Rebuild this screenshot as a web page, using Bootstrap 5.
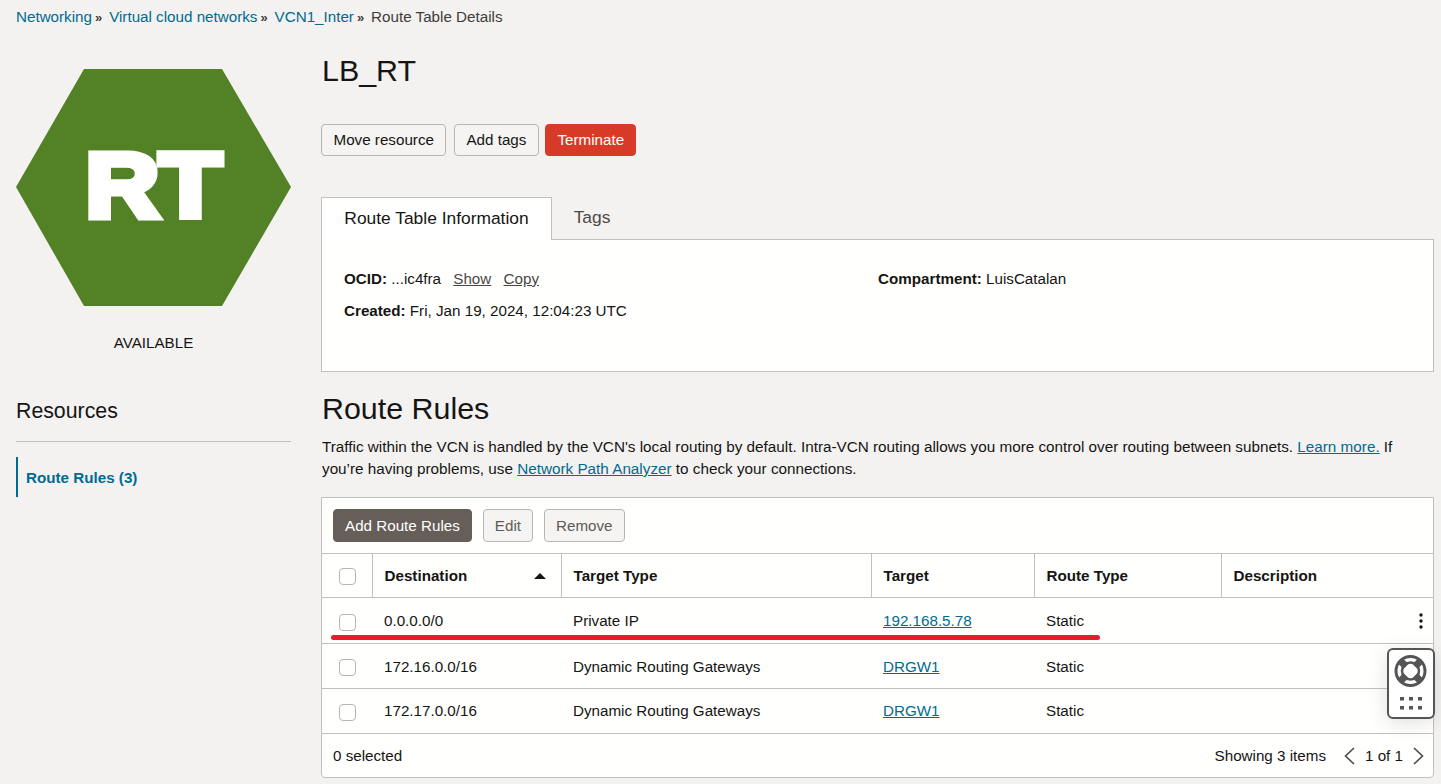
<!DOCTYPE html>
<html lang="en">
<head>
    <meta charset="UTF-8">
    <title>Route Table Details</title>
    <link href="https://cdn.jsdelivr.net/npm/bootstrap@5.3.0/dist/css/bootstrap.min.css" rel="stylesheet">
    <style>
        html, body { height: 784px; overflow: hidden; }
        body { background: #f3f2f1; color: #161513; font-family: "Liberation Sans", Arial, sans-serif; font-size: 15.2px; line-height: 20px; position: relative; }
        a { color: #006b8f; }
        .page-wrap { padding: 7px 7px 0 16px; }
        .crumbs { height: 20px; color: #3f3c3a; }
        .crumbs a { text-decoration: none; }
        .crumbs .sep { font-size: 13px; font-weight: 700; margin: 0 2.7px 0 3px; }
        .main-row { display: flex; gap: 30px; margin-top: 25px; }
        .side-col { width: 275px; flex: none; }
        .content-col { flex: 1; min-width: 0; }
        .hex-logo { display: block; margin-top: 17px; }
        .hex-logo text { font-family: "Liberation Sans", Arial, sans-serif; font-weight: 700; font-size: 90px; fill: #fff; stroke: #fff; stroke-width: 7px; stroke-linejoin: miter; }
        .state-label { text-align: center; margin-top: 27px; }
        .res-title { font-size: 21.3px; line-height: 24px; margin: 46px 0 0; padding-bottom: 18px; border-bottom: 1px solid #c3bfba; font-weight: 400; }
        .res-link { display: block; margin-top: 15px; border-left: 2px solid #006b8f; padding: 11px 8px; font-weight: 700; color: #006b8f; text-decoration: none; height: 40px; }
        .page-title { font-size: 30.4px; line-height: 36px; font-weight: 400; margin: 0; padding-left: 1px; }
        .action-row { margin-top: 36px; display: flex; gap: 7.5px; }
        .oci-btn { height: 32px; padding: 0 11.5px; font-size: 15.2px; line-height: 30px; border: 1px solid #b9b5b0; border-radius: 4px; background: #f5f4f2; color: #161513; }
        .oci-btn.danger { background: #d73b27; border-color: #d73b27; color: #fff; padding: 0 11px; margin-left: -1px; }
        .oci-btn.dark { background: #665e59; border-color: #665e59; color: #fff; }
        .oci-btn.off { color: #5f5a56; }
        .tab-strip { margin-top: 41px; display: flex; }
        .tab-on { height: 43px; width: 231px; text-align: center; font-size: 17.4px; line-height: 41px; background: #fff; border: 1px solid #c3bfba; border-bottom: 0; position: relative; z-index: 1; }
        .tab-off { width: 80px; text-align: center; font-size: 17.4px; line-height: 41px; color: #4c4845; }
        .info-panel { background: #fffffe; border: 1px solid #c3bfba; height: 133px; margin-top: -1px; padding: 29px 22px 0; display: flex; }
        .info-left { width: 534px; }
        .info-line { margin-bottom: 12px; }
        .info-line a { color: #4c4845; margin-left: 8px; }
        .section-title { font-size: 30.4px; line-height: 38px; font-weight: 400; margin: 17px 0 0; padding-left: 1px; }
        .section-text { margin: 9px 0 0; padding-left: 1px; line-height: 22px; font-size: 15.27px; }
        .table-panel { background: #fffffe; border: 1px solid #c3bfba; border-radius: 0 0 4px 4px; margin-top: 17px; }
        .table-tools { height: 56px; padding: 11px 11px 0; display: flex; gap: 11px; border-bottom: 1px solid #c3bfba; }
        .table-tools .oci-btn { height: 33px; padding: 0 11px; }
        .rule-table { table-layout: fixed; margin: 0; width: 100%; --bs-table-bg: transparent; }
        .rule-table th, .rule-table td { padding: 0 12px; border-bottom: 1px solid #c3bfba; vertical-align: middle; color: #161513; }
        .rule-table th { height: 43px; padding-top: 2px; font-weight: 700; border-left: 1px solid #c3bfba; }
        .rule-table th:first-child { border-left: 0; padding-left: 17px; }
        .rule-table td { height: 45px; padding-top: 2px; }
        .rule-table td:first-child { padding-left: 17px; padding-top: 4px; }
        .rule-table tbody tr:first-child td { height: 46px; }
        .rule-table tbody tr:last-child td:not(:first-child) { padding-top: 0; }
        .sort-head { display: flex; justify-content: space-between; align-items: center; }
        .sort-arrow { width: 0; height: 0; border-left: 6px solid transparent; border-right: 6px solid transparent; border-bottom: 6px solid #161513; margin-right: 3px; }
        .fake-check { display: block; width: 17px; height: 17px; border: 1px solid #b9b5b0; border-radius: 4px; background: #fff; }
        .row-menu { float: right; margin-right: -2px; }
        .table-foot { height: 43px; padding: 2px 9px 0 11px; display: flex; justify-content: space-between; align-items: center; }
        .pager { display: flex; align-items: center; gap: 10px; }
        .red-mark { position: absolute; left: 331px; top: 635px; width: 769px; height: 5px; background: #e81c2a; border-radius: 3px; }
        .help-widget { position: absolute; left: 1387px; top: 648px; width: 48px; height: 71px; background: #fff; border: 2px solid #555; border-radius: 6px; box-shadow: 0 4px 20px rgba(0,0,0,.12); }
    </style>
</head>
<body>

<div class="page-wrap">
    <div class="crumbs">
        <a href="#">Networking</a><span class="sep">&raquo;</span>
        <a href="#">Virtual cloud networks</a><span class="sep">&raquo;</span>
        <a href="#">VCN1_Inter</a><span class="sep">&raquo;</span>
        Route Table Details
    </div>

    <div class="main-row">
        <!-- left column -->
        <div class="side-col">
            <svg class="hex-logo" width="275" height="237" viewBox="0 0 275 237">
                <polygon points="68,0 206,0 275,118 206,237 68,237 0,118" fill="#538125"/>
                <text x="69.500" y="148" textLength="136" lengthAdjust="spacingAndGlyphs">RT</text>
            </svg>
            <div class="state-label">AVAILABLE</div>
            <h2 class="res-title">Resources</h2>
            <a class="res-link" href="#">Route Rules (3)</a>
        </div>

        <!-- main column -->
        <div class="content-col">
            <h1 class="page-title">LB_RT</h1>
            <div class="action-row">
                <button class="oci-btn" type="button">Move resource</button>
                <button class="oci-btn" type="button">Add tags</button>
                <button class="oci-btn danger" type="button">Terminate</button>
            </div>

            <div class="tab-strip">
                <div class="tab-on">Route Table Information</div>
                <div class="tab-off">Tags</div>
            </div>
            <div class="info-panel">
                <div class="info-left">
                    <div class="info-line"><b>OCID:</b> ...ic4fra <a href="#">Show</a> <a href="#">Copy</a></div>
                    <div class="info-line"><b>Created:</b> Fri, Jan 19, 2024, 12:04:23 UTC</div>
                </div>
                <div><b>Compartment:</b> LuisCatalan</div>
            </div>

            <h2 class="section-title">Route Rules</h2>
            <p class="section-text">Traffic within the VCN is handled by the VCN's local routing by default. Intra-VCN routing allows you more control over routing between subnets. <a href="#">Learn more.</a> If you’re having problems, use <a href="#">Network Path Analyzer</a> to check your connections.</p>

            <div class="table-panel">
                <div class="table-tools">
                    <button class="oci-btn dark" type="button">Add Route Rules</button>
                    <button class="oci-btn off" type="button">Edit</button>
                    <button class="oci-btn off" type="button">Remove</button>
                </div>
                <table class="table rule-table">
                    <colgroup>
                        <col style="width:50px"><col style="width:189px"><col style="width:310px"><col style="width:163px"><col style="width:187px"><col>
                    </colgroup>
                    <thead>
                        <tr>
                            <th><span class="fake-check"></span></th>
                            <th><div class="sort-head">Destination <span class="sort-arrow"></span></div></th>
                            <th>Target Type</th>
                            <th>Target</th>
                            <th>Route Type</th>
                            <th>Description</th>
                        </tr>
                    </thead>
                    <tbody>
                        <tr>
                            <td><span class="fake-check"></span></td>
                            <td>0.0.0.0/0</td>
                            <td>Private IP</td>
                            <td><a href="#">192.168.5.78</a></td>
                            <td>Static</td>
                            <td>
                                <svg class="row-menu" width="4" height="16" viewBox="0 0 4 16" fill="#161513"><circle cx="2" cy="2" r="1.7"/><circle cx="2" cy="8" r="1.7"/><circle cx="2" cy="14" r="1.7"/></svg>
                            </td>
                        </tr>
                        <tr>
                            <td><span class="fake-check"></span></td>
                            <td>172.16.0.0/16</td>
                            <td>Dynamic Routing Gateways</td>
                            <td><a href="#">DRGW1</a></td>
                            <td>Static</td>
                            <td></td>
                        </tr>
                        <tr>
                            <td><span class="fake-check"></span></td>
                            <td>172.17.0.0/16</td>
                            <td>Dynamic Routing Gateways</td>
                            <td><a href="#">DRGW1</a></td>
                            <td>Static</td>
                            <td></td>
                        </tr>
                    </tbody>
                </table>
                <div class="table-foot">
                    <span>0 selected</span>
                    <div class="pager">
                        <span class="pager-count">Showing 3 items</span>
                        <svg class="ms-2" width="11" height="20" viewBox="0 0 11 20" fill="none" stroke="#4c4845" stroke-width="1.6"><path d="M10 2 1.5 10l8.500 8"/></svg>
                        <span>1 of 1</span>
                        <svg width="11" height="20" viewBox="0 0 11 20" fill="none" stroke="#4c4845" stroke-width="1.6"><path d="m1 2 8.500 8L1 18"/></svg>
                    </div>
                </div>
            </div>
        </div>
    </div>
</div>

<div class="red-mark"></div>

<div class="help-widget">
    <svg class="d-block" width="44" height="67" viewBox="0 0 44 67">
        <circle cx="21.500" cy="21" r="14.500" fill="none" stroke="#555" stroke-width="3"/>
        <circle cx="21.500" cy="21" r="8.500" fill="none" stroke="#555" stroke-width="2.500"/>
        <path d="m11 10.500 6 6M32 10.500l-6 6M11 31.500l6-6M32 31.500l-6-6" stroke="#555" stroke-width="7"/>
        <g fill="#555"><rect x="11" y="47" width="4" height="3.500"/><rect x="20" y="47" width="4" height="3.500"/><rect x="29" y="47" width="4" height="3.500"/><rect x="11" y="56" width="4" height="3.500"/><rect x="20" y="56" width="4" height="3.500"/><rect x="29" y="56" width="4" height="3.500"/></g>
    </svg>
</div>

<script src="https://cdn.jsdelivr.net/npm/bootstrap@5.3.0/dist/js/bootstrap.bundle.min.js"></script>
</body>
</html>
